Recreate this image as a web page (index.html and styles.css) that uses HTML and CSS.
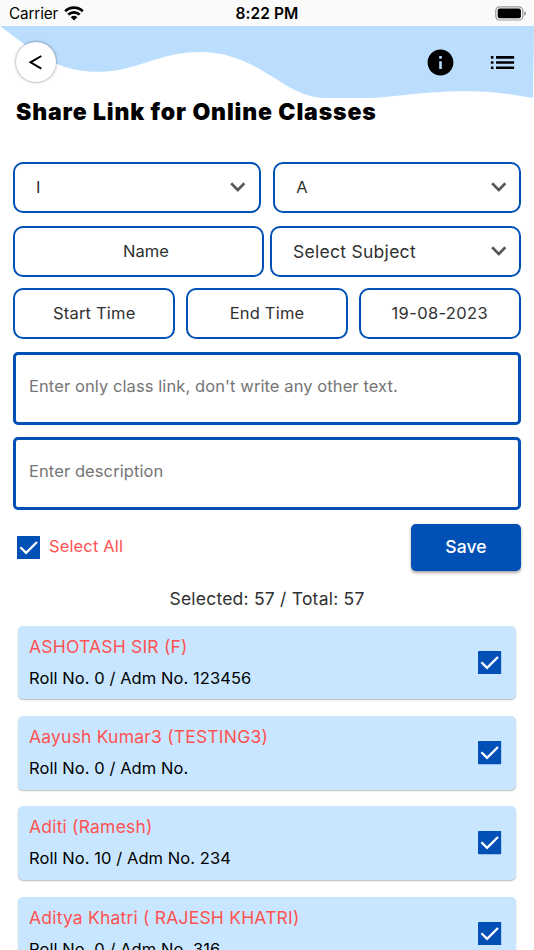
FILE: index.html
```html
<!DOCTYPE html>
<html lang="en">
<head>
<meta charset="utf-8">
<title>Share Link for Online Classes</title>
<link rel="stylesheet" href="styles.css">
</head>
<body>
<svg class="defs" width="0" height="0" aria-hidden="true">
  <symbol id="check" viewBox="0 0 23.4 23.4"><rect width="23.4" height="23.4" rx="0.8" fill="#0050b5"/><path d="M3.4 11.2 9.1 16.9 20 6" fill="none" stroke="#fff" stroke-width="2.3"/></symbol>
  <symbol id="chevron" viewBox="0 0 24 24"><path d="M16.59 8.59 12 13.17 7.41 8.59 6 10l6 6 6-6z" fill="#555" stroke="#555" stroke-width=".25"/></symbol>
</svg>
<div class="status">
  <div class="carrier"><span>Carrier</span>
    <svg class="wifi" width="20" height="15" viewBox="0 0 20 15"><g fill="none" stroke="#000" stroke-width="2.7"><path d="M1.2 5.3a12.6 12.6 0 0 1 17.6 0"/><path d="M4.3 8.6a8.2 8.2 0 0 1 11.4 0"/></g><path d="M6.7 11.2a4.7 4.7 0 0 1 6.6 0L10 14.6z"/></svg>
  </div>
  <div class="time">8:22 PM</div>
  <div class="battery"><svg width="32" height="15" viewBox="0 0 32 15"><rect x=".8" y=".8" width="27" height="13.2" rx="3.8" fill="none" stroke="#999" stroke-width="1.2"/><rect x="2.7" y="2.6" width="23.2" height="9.6" rx="2" fill="#000"/><path d="M29.2 5.1q1.9.7 1.9 2.4t-1.9 2.3z" fill="#999"/></svg></div>
</div>
<header class="hero">
  <svg class="wave" width="534" height="73" viewBox="0 0 534 73"><path d="M0 0L24 18C48 37 70 45.8 99 45.8C135 45.8 160 26 200 26C260 26 283 71.5 325 72H372C410 69 430 65.2 465 65.2C500 65.2 515 69.5 533 72L534 0Z" fill="#bbdefe"/></svg>
  <div class="bar">
    <div class="back"><svg width="40" height="40" viewBox="0 0 40 40"><path d="M25.3 14 14.5 20.3 25.3 26.6" fill="none" stroke="#000" stroke-width="2"/></svg></div>
    <svg class="info" width="31" height="31" viewBox="0 0 24 24"><path d="M12 2C6.48 2 2 6.48 2 12s4.48 10 10 10 10-4.48 10-10S17.52 2 12 2zm1 15h-2v-6h2v6zm0-8h-2V7h2v2z"/></svg>
    <svg class="list-icon" width="31" height="31" viewBox="0 0 24 24"><path d="M3 13h2v-2H3v2zm0 4h2v-2H3v2zm0-8h2V7H3v2zm4 4h14v-2H7v2zm0 4h14v-2H7v2zM7 7v2h14V7H7z"/></svg>
  </div>
  <h1>Share Link for Online Classes</h1>
</header>
<main>
  <div class="row r1">
    <div class="box select"><span>I</span><svg class="chev"><use href="#chevron"/></svg></div>
    <div class="box select"><span>A</span><svg class="chev"><use href="#chevron"/></svg></div>
  </div>
  <div class="row r2">
    <div class="box person">Name</div>
    <div class="box select"><span class="big">Select Subject</span><svg class="chev"><use href="#chevron"/></svg></div>
  </div>
  <div class="row r3">
    <div class="box">Start Time</div>
    <div class="box">End Time</div>
    <div class="box date">19-08-2023</div>
  </div>
  <div class="area">Enter only class link, don't write any other text.</div>
  <div class="area">Enter description</div>
  <div class="actions">
    <svg class="check"><use href="#check"/></svg>
    <span class="all">Select All</span>
    <div class="save">Save</div>
  </div>
  <div class="count">Selected: 57 / Total: 57</div>
  <div class="cards">
    <div class="card"><div class="who"><div class="name">ASHOTASH SIR (F)</div><div class="sub">Roll No. 0 / Adm No. 123456</div></div><svg class="check"><use href="#check"/></svg></div>
    <div class="card"><div class="who"><div class="name">Aayush Kumar3 (TESTING3)</div><div class="sub">Roll No. 0 / Adm No.</div></div><svg class="check"><use href="#check"/></svg></div>
    <div class="card"><div class="who"><div class="name">Aditi (Ramesh)</div><div class="sub">Roll No. 10 / Adm No. 234</div></div><svg class="check"><use href="#check"/></svg></div>
    <div class="card"><div class="who"><div class="name">Aditya Khatri ( RAJESH KHATRI)</div><div class="sub">Roll No. 0 / Adm No. 316</div></div><svg class="check"><use href="#check"/></svg></div>
  </div>
</main>
</body>
</html>
```
FILE: styles.css
```css
* { box-sizing: border-box; }
html, body { margin: 0; height: 950px; overflow: hidden; background: #fff; }
body { font-family: Inter, "Liberation Sans", sans-serif; font-size: 16.5px; letter-spacing: .07px; color: #303030; line-height: 20px; white-space: nowrap; }
svg { display: block; flex: none; }
.defs { position: absolute; }
.status { height: 26px; background: #fafafa; display: grid; grid-template-columns: 1fr auto 1fr; align-items: center; color: #000; padding: 2px 7px 0 9px; font-size: 15.5px; }
.carrier { display: flex; gap: 6px; align-items: center; font-size: 15.3px; letter-spacing: -.15px; }
.wifi { margin-top: -2px; }
.time { font-weight: 600; margin-right: 2px; }
.battery { justify-self: end; margin-top: -1px; }
.hero { position: relative; height: 135.5px; }
.wave { position: absolute; left: 0; top: 0; }
.bar { position: relative; display: flex; align-items: center; height: 72px; padding-left: 16px; }
.back { width: 40px; height: 40px; border-radius: 50%; background: #fff; box-shadow: 0 0 3px rgba(0,0,0,.5); }
.info { margin-left: 369px; }
.list-icon { margin-left: 31px; }
h1 { position: relative; margin: 0 0 0 16px; font-size: 23px; line-height: 28px; font-weight: 900; letter-spacing: .87px; color: #000; }
main { padding: 0 13px; }
.row { display: grid; }
.r1 { grid-template-columns: 1fr 1fr; gap: 12.5px; }
.r2 { grid-template-columns: 1fr 1fr; gap: 6px; margin-top: 12.9px; }
.r3 { grid-template-columns: 1fr 1fr 1fr; gap: 10.3px; margin-top: 10.6px; letter-spacing: .2px; }
.box { height: 51.5px; border: 2px solid #0050b5; border-radius: 10px; display: flex; align-items: center; justify-content: center; padding-bottom: 1px; }
.person { padding-left: 15px; }
.date { letter-spacing: .35px; }
.select { justify-content: space-between; padding: 0 6px 1px 21px; }
.chev { width: 29.5px; height: 29.5px; }
.big { font-size: 17.5px; letter-spacing: .28px; padding-top: 1px; }
.area { height: 72.7px; border: 3px solid #0050b5; border-radius: 5px; margin-top: 12.5px; padding: 21.2px 13px 0; color: #757575; letter-spacing: .09px; }
.actions { display: flex; align-items: center; height: 47px; margin-top: 14px; padding-left: 4px; }
.check { width: 23.4px; height: 23.4px; }
.all { margin-left: 8.5px; margin-top: -2px; color: #ff5252; letter-spacing: .15px; }
.save { margin-left: auto; width: 110px; height: 46.5px; border-radius: 5px; background: #0050b5; color: #fff; font-size: 17.5px; font-weight: 550; display: flex; align-items: center; justify-content: center; box-shadow: 0 1.5px 3px rgba(0,0,0,.35); }
.count { margin-top: 18px; font-size: 17.5px; letter-spacing: .22px; text-align: center; }
.cards { padding: 0 5px; margin-top: 17px; display: grid; gap: 16.9px; }
.card { height: 73.4px; border-radius: 5px; background: #c8e6ff; box-shadow: 0 1px 1.5px rgba(0,0,0,.28); display: flex; justify-content: space-between; align-items: center; padding: 0 14.5px 0 11px; }
.who { padding-bottom: 1.5px; }
.name { color: #ff5252; font-size: 17.5px; letter-spacing: .2px; line-height: 22px; margin-bottom: 10px; }
.sub { color: #000; }
```
